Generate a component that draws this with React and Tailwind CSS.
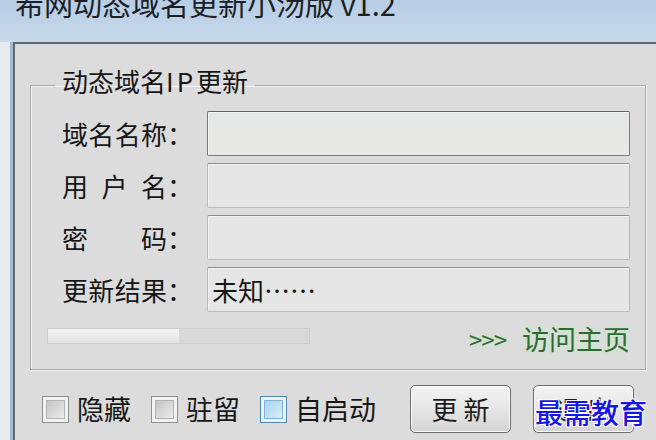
const cjk = "font-['Noto_Sans_CJK_SC','Noto_Sans',sans-serif]"

// label laid out as spread characters followed by a full-width colon
const FieldLabel = ({ chars }) => (
  <div className="flex w-[145px] shrink-0 items-center">
    <div className="flex w-[105px] justify-between">
      {chars.map((c, i) => (
        <span key={i}>{c}</span>
      ))}
    </div>
    <span>：</span>
  </div>
)

const Field = ({ chars, value, focused }) => (
  <div className="flex h-[45px] items-center">
    <FieldLabel chars={chars} />
    <div
      className={
        focused
          ? 'flex h-full flex-1 items-center rounded-[2px] border border-[#6f7e88] border-t-[#56646e] bg-linear-to-b from-[#e4e8e8] to-[#e9e9e5] px-[4px] shadow-[inset_1px_1px_0_#f4f4f4]'
          : 'flex h-full flex-1 items-center rounded-[2px] border border-[#b9b9b9] border-t-[#8e8e8e] bg-[#e6e6e6] px-[4px] shadow-[inset_1px_1px_0_#f2f2f2]'
      }
    >
      {value}
    </div>
  </div>
)

const Check = ({ label, active }) => (
  <label className="flex items-center gap-[8px]">
    <span
      className={
        active
          ? 'flex h-[27px] w-[27px] items-center justify-center border border-[#4f86b4] bg-[#e9f3f9]'
          : 'flex h-[27px] w-[27px] items-center justify-center border border-[#8f9090] bg-[#f2f2f2]'
      }
    >
      <span
        className={
          active
            ? 'h-[19px] w-[19px] border border-[#7fb4d8] bg-linear-to-br from-[#a9d4ee] to-[#d6ecf8]'
            : 'h-[19px] w-[19px] border border-[#b2b2b2] bg-linear-to-br from-[#c4c4c4] to-[#ececec]'
        }
      />
    </span>
    <span>{label}</span>
  </label>
)

const Button = ({ children }) => (
  <button
    type="button"
    className="flex h-[48px] w-[101px] items-center justify-center rounded-[5px] border-[1.5px] border-[#6e6e6e] bg-linear-to-b from-[#f3f3f3] via-[#e6e6e6] to-[#d3d3d3] text-[26px] leading-none text-[#1b1b1b] shadow-[inset_0_0_0_1px_#fafafa]"
  >
    {children}
  </button>
)

export default function App() {
  return (
    <div className={`relative flex h-[440px] w-[656px] flex-col overflow-hidden bg-[#e8ebee] text-[#161616] ${cjk}`}>
      {/* title bar */}
      <div className="h-[42px] shrink-0 overflow-hidden bg-linear-to-b from-[#b7cde3] via-[#bfd3e8] to-[#c9daeb]">
        <div className="-mt-[14px] whitespace-nowrap pl-[15px] text-[29px] leading-[34px] text-[#1c1f26]">
          希网动态域名更新小汤版 v1.2
        </div>
      </div>

      <div className="flex flex-1">
        <div className="w-[10px] bg-[#e8ebee]" />
        <div className="flex flex-1 border-l-[3px] border-[#a6b9cb]">
          <div className="flex flex-1 flex-col border-l-2 border-t-2 border-[#5e6872] bg-[#dcdcdc] text-[26px]">
            {/* group box */}
            <fieldset className="ml-[15px] mr-[10px] mt-[22px] h-[304px] border border-[#a9a9a9] pb-[10px] pl-[31px] pr-[15px] shadow-[inset_1px_1px_0_#f5f5f5,1px_1px_0_#f5f5f5]">
              <legend className="-ml-[7px] px-[7px] pb-[8px] leading-[30px]">
                动态域名<span className="tracking-[3px]">IP</span>更新
              </legend>
              <div className="mt-[7px] flex flex-col gap-[7px]">
                <Field chars={['域', '名', '名', '称']} focused />
                <Field chars={['用', '户', '名']} />
                <Field chars={['密', '码']} />
                <Field chars={['更', '新', '结', '果']} value={<span className="leading-none">未知……</span>} />
              </div>
              <div className="-ml-[15px] mt-[10px] flex h-[34px] items-start justify-between">
                <div className="mt-[6px] flex h-[16px] w-[263px] border border-[#cdcdcd] bg-[#d9d9d9]">
                  <div className="h-full w-[131px] bg-linear-to-b from-[#f4f4f4] to-[#e2e2e2]" />
                </div>
                <a className="flex items-center gap-[16px] text-[27px] leading-[34px] text-[#2c6b2f] [text-shadow:0_0_6px_#c2e7c2]">
                  <span className="text-[24px] tracking-[-1px]">&gt;&gt;&gt;</span>
                  <span>访问主页</span>
                </a>
              </div>
            </fieldset>

            {/* option row */}
            <div className="mt-[15px] flex items-center pl-[27px]">
              <div className="flex items-center gap-[20px] text-[27px]">
                <Check label="隐藏" />
                <Check label="驻留" />
                <Check label="自启动" active />
              </div>
              <div className="ml-[34px] flex gap-[22px]">
                <Button>更&nbsp;新</Button>
                <Button>退&nbsp;出</Button>
              </div>
            </div>
          </div>
        </div>
      </div>

      {/* site mark */}
      <div className="pointer-events-none absolute bottom-[14px] left-[535px] text-[28px] font-medium leading-none text-[#1515e6] [text-shadow:1px_1px_0_#fff,-1px_-1px_0_#fff,1px_-1px_0_#fff,-1px_1px_0_#fff]">
        最需教育
      </div>
    </div>
  )
}
